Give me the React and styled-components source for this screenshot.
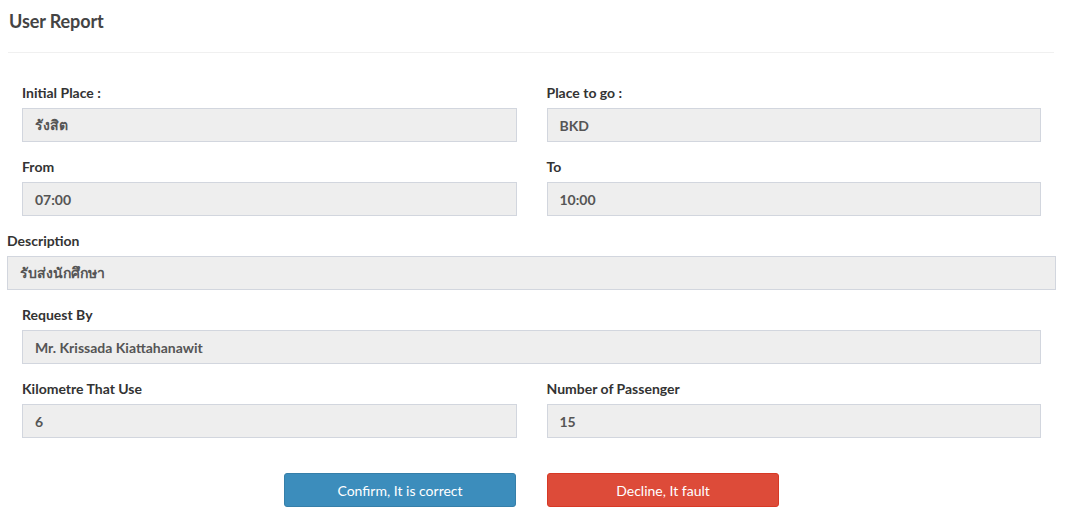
import React from "react";
import styled, { createGlobalStyle } from "styled-components";

const GlobalStyle = createGlobalStyle`
  html, body {
    margin: 0;
    padding: 0;
    background: #ffffff;
    font-family: "Source Sans Pro", Lato, "Noto Sans", sans-serif;
    color: #333;
  }
  * {
    box-sizing: border-box;
  }
`;

const Box = styled.div`
  width: 1049px;
  margin-left: 7px;
  background: #fff;
`;

const Header = styled.div`
  height: 53px;
  margin: 0 2px 0 1px;
  padding: 10px 1px 0;
  border-bottom: 1px solid #f0f0f0;
`;

const Title = styled.h3`
  margin: 0;
  font-size: 18px;
  line-height: 22px;
  font-weight: 700;
  letter-spacing: -0.1px;
  color: #444;
`;

const Body = styled.div`
  padding-top: 30px;
`;

const Row = styled.div`
  display: grid;
  grid-template-columns: ${(p) => (p.$full ? "1fr" : "1fr 1fr")};
  column-gap: 30px;
  padding: ${(p) => (p.$flush ? "0" : "0 15px")};
`;

const Group = styled.div`
  margin-bottom: 15px;
`;

const Label = styled.label`
  display: block;
  font-size: 14px;
  line-height: 20px;
  font-weight: 700;
  color: #333;
  margin-bottom: 5px;
`;

const Field = styled.div`
  height: 34px;
  padding: 0 12px;
  display: flex;
  align-items: center;
  background: #eeeeee;
  border: 1px solid #d2d6de;
  font-size: 14px;
  font-weight: 700;
  color: #555;
`;

const Actions = styled.div`
  display: flex;
  justify-content: center;
  gap: 31px;
  padding-top: 20px;
`;

const Button = styled.button`
  width: 232px;
  height: 34px;
  border-radius: 3px;
  border: 1px solid ${(p) => (p.$danger ? "#d73925" : "#367fa9")};
  background: ${(p) => (p.$danger ? "#dd4b39" : "#3c8dbc")};
  color: #fff;
  font-family: inherit;
  font-size: 14px;
  cursor: pointer;
`;

const FormGroup = ({ label, value }) => (
  <Group>
    <Label>{label}</Label>
    <Field>{value}</Field>
  </Group>
);

export default function App() {
  return (
    <>
      <GlobalStyle />
      <Box>
        <Header>
          <Title>User Report</Title>
        </Header>
        <Body>
          <Row>
            <FormGroup label="Initial Place :" value="รังสิต" />
            <FormGroup label="Place to go :" value="BKD" />
          </Row>
          <Row>
            <FormGroup label="From" value="07:00" />
            <FormGroup label="To" value="10:00" />
          </Row>
          <Row $full $flush>
            <FormGroup label="Description" value="รับส่งนักศึกษา" />
          </Row>
          <Row $full>
            <FormGroup label="Request By" value="Mr. Krissada Kiattahanawit" />
          </Row>
          <Row>
            <FormGroup label="Kilometre That Use" value="6" />
            <FormGroup label="Number of Passenger" value="15" />
          </Row>
          <Actions>
            <Button>Confirm, It is correct</Button>
            <Button $danger>Decline, It fault</Button>
          </Actions>
        </Body>
      </Box>
    </>
  );
}
